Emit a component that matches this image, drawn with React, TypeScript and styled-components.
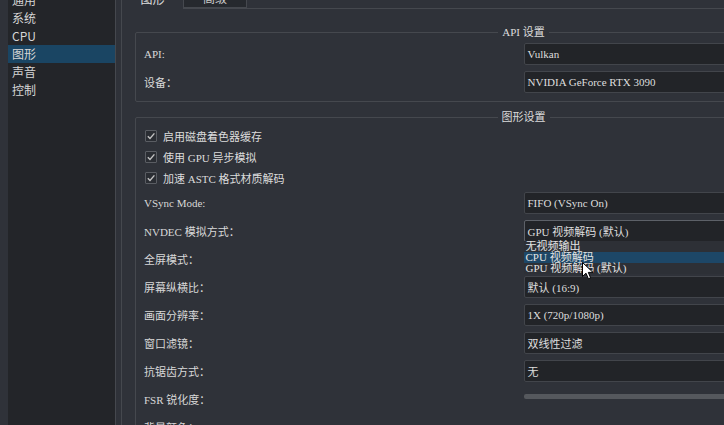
import styled, { createGlobalStyle } from "styled-components";

const GlobalStyle = createGlobalStyle`
    html, body {
        margin: 0;
        background: #2f3239;
        overflow: hidden;
    }
    #root {
        width: 724px;
        height: 425px;
    }
`

const uiFont = `"Liberation Serif", "Noto Sans CJK SC", serif`
const sansFont = `"Noto Sans CJK SC", "Noto Sans", sans-serif`

const categories = ["通用", "系统", "CPU", "图形", "声音", "控制"]

const checks = ["启用磁盘着色器缓存", "使用 GPU 异步模拟", "加速 ASTC 格式材质解码"]

const popupItems = ["无视频输出", "CPU 视频解码", "GPU 视频解码 (默认)"]

export default function App() {
    return (
        <Window>
            <GlobalStyle/>
            <Sidebar>
                {categories.map((c) => (
                    <SideItem key={c} $active={c === "图形"}>{c}</SideItem>
                ))}
            </Sidebar>
            <Main>
                <TabBar>
                    <Tab $active>图形</Tab>
                    <Tab>高级</Tab>
                </TabBar>
                <Pane>
                    <Group>
                        <Legend>API 设置</Legend>
                        <FormGrid>
                            <Label>API:</Label>
                            <Combo>Vulkan</Combo>
                            <Label>设备：</Label>
                            <Combo>NVIDIA GeForce RTX 3090</Combo>
                        </FormGrid>
                    </Group>
                    <Group>
                        <Legend>图形设置</Legend>
                        <CheckList>
                            {checks.map((c) => (
                                <CheckRow key={c}>
                                    <Box>
                                        <svg width="10" height="10" viewBox="0 0 10 10">
                                            <path d="M1.8 5.2 L4 7.4 L8.4 2.4" fill="none" stroke="#c4c4c4"
                                                  strokeWidth="1.4"/>
                                        </svg>
                                    </Box>
                                    {c}
                                </CheckRow>
                            ))}
                        </CheckList>
                        <FormGrid $spaced>
                            <Label>VSync Mode:</Label>
                            <Combo>FIFO (VSync On)</Combo>
                            <Label>NVDEC 模拟方式：</Label>
                            <Combo $focused>
                                GPU 视频解码 (默认)
                                <Popup>
                                    {popupItems.map((p) => (
                                        <PopupItem key={p} $highlight={p === "CPU 视频解码"}>{p}</PopupItem>
                                    ))}
                                </Popup>
                            </Combo>
                            <Label>全屏模式：</Label>
                            <Combo>独占全屏</Combo>
                            <Label>屏幕纵横比：</Label>
                            <Combo>默认 (16:9)</Combo>
                            <Label>画面分辨率：</Label>
                            <Combo>1X (720p/1080p)</Combo>
                            <Label>窗口滤镜：</Label>
                            <Combo>双线性过滤</Combo>
                            <Label>抗锯齿方式：</Label>
                            <Combo>无</Combo>
                            <Label>FSR 锐化度：</Label>
                            <Slider><Groove/></Slider>
                            <Label>背景颜色：</Label>
                            <EmptyCell/>
                        </FormGrid>
                    </Group>
                </Pane>
            </Main>
            <Cursor width="12" height="18" viewBox="0 0 12 18">
                <path d="M0.5 0.5 L0.5 14.5 L4 11.2 L6.4 16.8 L8.6 15.8 L6.3 10.4 L11 10.4 Z"
                      fill="#ffffff" stroke="#000000" strokeWidth="1" strokeLinejoin="round"/>
            </Cursor>
        </Window>
    );
}

const Window = styled.div`
    position: relative;
    width: 724px;
    height: 425px;
    overflow: hidden;
    display: flex;
    gap: 5px;
    padding-left: 8px;
    box-sizing: border-box;
    background: #2f3239;
    font-family: ${uiFont};
`

const Sidebar = styled.ul`
    flex: 0 0 108px;
    box-sizing: border-box;
    margin: -9px 0 0;
    padding: 0;
    list-style: none;
    background: #232529;
    border-right: 1px solid #45484e;
`

const SideItem = styled.li<{ $active?: boolean }>`
    height: 18px;
    line-height: 18px;
    padding-left: 4px;
    font-family: ${sansFont};
    font-size: 12px;
    color: #d6d6d6;
    background: ${({$active}) => ($active ? "#1a4563" : "transparent")};
`

const Main = styled.div`
    flex: 0 0 805px;
    display: flex;
    flex-direction: column;
`

const TabBar = styled.div`
    display: flex;
    align-items: flex-start;
    height: 22px;
    margin-top: -13px;
    position: relative;
    z-index: 1;
`

const Tab = styled.div<{ $active?: boolean }>`
    box-sizing: border-box;
    width: ${({$active}) => ($active ? "63px" : "64px")};
    height: ${({$active}) => ($active ? "22px" : "21px")};
    margin-left: ${({$active}) => ($active ? "0" : "-1px")};
    display: flex;
    align-items: center;
    justify-content: center;
    border: 1px solid #45484e;
    border-bottom: ${({$active}) => ($active ? "none" : "1px solid #45484e")};
    background: ${({$active}) => ($active ? "#2f3239" : "#26292e")};
    font-family: ${sansFont};
    font-size: 12px;
    color: ${({$active}) => ($active ? "#e0e0e0" : "#c8c8c8")};
`

const Pane = styled.div`
    margin-top: -1px;
    flex: 1;
    display: flex;
    flex-direction: column;
    gap: 9px;
    padding: 17px 13px;
    border: 1px solid #45484e;
    background: #2f3239;
`

const Group = styled.fieldset`
    margin: 0;
    min-width: 0;
    padding: 5px 7px 8px;
    border: 1px solid #45484e;
    border-radius: 2px;
`

const Legend = styled.legend`
    margin: 0 auto;
    padding: 0 4px;
    font-size: 11px;
    line-height: 12px;
    color: #dcdcdc;
`

const FormGrid = styled.div<{ $spaced?: boolean }>`
    display: grid;
    grid-template-columns: 1fr 1fr;
    row-gap: 6px;
    align-items: center;
    margin-top: ${({$spaced}) => ($spaced ? "7px" : "0")};
`

const Label = styled.span`
    padding-left: 1px;
    font-size: 11px;
    color: #d8d8d8;
`

const Combo = styled.div<{ $focused?: boolean }>`
    position: relative;
    box-sizing: border-box;
    height: 22px;
    display: flex;
    align-items: center;
    padding: 0 3px;
    border: 1px solid ${({$focused}) => ($focused ? "#5d6168" : "#42454b")};
    border-radius: 2px;
    background: #222428;
    font-size: 11px;
    color: #dedede;
    white-space: nowrap;
`

const EmptyCell = styled.div`
    height: 22px;
`

const Popup = styled.ul`
    position: absolute;
    top: 100%;
    left: -1px;
    right: -1px;
    z-index: 5;
    margin: 0;
    padding: 0;
    list-style: none;
    background: #2d3036;
`

const PopupItem = styled.li<{ $highlight?: boolean }>`
    height: 11px;
    line-height: 11px;
    padding-left: 2px;
    font-size: 11px;
    color: #e4e4e4;
    background: ${({$highlight}) => ($highlight ? "#1d4767" : "transparent")};
`

const CheckList = styled.div`
    display: flex;
    flex-direction: column;
    gap: 6px;
`

const CheckRow = styled.label`
    display: flex;
    align-items: center;
    gap: 6px;
    height: 15px;
    margin-left: 2px;
    font-size: 11px;
    color: #dcdcdc;
`

const Box = styled.span`
    box-sizing: border-box;
    width: 12px;
    height: 12px;
    display: flex;
    align-items: center;
    justify-content: center;
    border: 1px solid #5a5d63;
    border-radius: 1px;
    background: #2a2d33;
`

const Slider = styled.div`
    height: 22px;
    padding-top: 6px;
    box-sizing: border-box;
`

const Groove = styled.div`
    height: 5px;
    border-radius: 2px;
    background: #55585d;
`

const Cursor = styled.svg`
    position: absolute;
    left: 582px;
    top: 262px;
    z-index: 10;
`
